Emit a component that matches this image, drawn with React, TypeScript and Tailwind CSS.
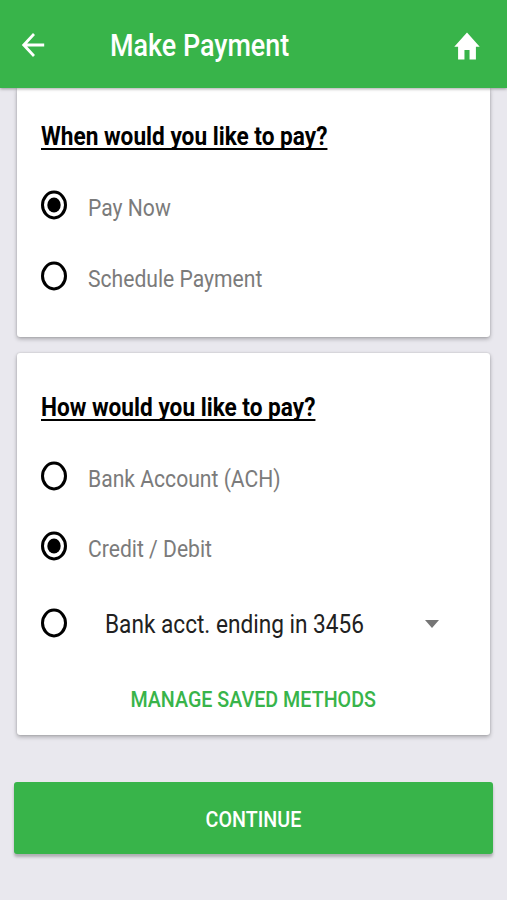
import React from 'react'

function Radio({ checked = false }: { checked?: boolean }) {
  return (
    <svg className="h-[30px] w-7 shrink-0" viewBox="0 0 28 30" fill="none">
      <ellipse cx="14" cy="15" rx="11.5" ry="12.9" stroke="#000" strokeWidth="3" />
      {checked && <ellipse cx="14" cy="15" rx="6.7" ry="7.5" fill="#000" />}
    </svg>
  )
}

function Option({ label, checked }: { label: string; checked?: boolean }) {
  return (
    <label className="flex h-[70.5px] items-center pl-[23px]">
      <Radio checked={checked} />
      <span className="ml-5 mt-1.5 origin-left scale-x-[0.88] whitespace-nowrap text-[24px] text-[#7b7b7b]">{label}</span>
    </label>
  )
}

function Heading({ children }: { children: string }) {
  return (
    <h2 className="flex h-[67px] items-center pl-6 pt-px">
      <span className="origin-left scale-x-[0.905] whitespace-nowrap text-[25px] font-bold text-black underline decoration-[1.5px] underline-offset-[3px] [text-decoration-skip-ink:none]">{children}</span>
    </h2>
  )
}

export default function App() {
  return (
    <div className="flex h-[900px] w-[507px] flex-col overflow-hidden bg-[#e9e8ee] font-[Roboto,sans-serif]">
      <header className="z-10 flex h-[87.5px] shrink-0 items-center bg-[#38b44a] pl-[19px] pr-[26px] pt-1 text-white shadow-[0_1px_3px_rgba(0,0,0,0.35)]">
        <svg className="-mt-0.5 h-[30px] w-7" viewBox="2 2 20 20" preserveAspectRatio="none" fill="currentColor">
          <path d="M20 11H7.83l5.59-5.59L12 4l-8 8 8 8 1.41-1.41L7.83 13H20v-2z" />
        </svg>
        <h1 className="ml-[63px] origin-left scale-x-[0.868] whitespace-nowrap text-[31px] font-medium">Make Payment</h1>
        <svg className="ml-auto h-[30px] w-[28px]" viewBox="1 2 22 19" preserveAspectRatio="none" fill="currentColor">
          <path d="M10 20v-6h4v6h5v-8h3L12 3 2 12h3v8z" />
        </svg>
      </header>

      <main className="flex flex-col">
        <section className="mx-[17px] h-[249px] rounded-b-[3px] bg-white pt-[15.5px] shadow-[0_2px_4px_rgba(0,0,0,0.28),0_0_2px_rgba(0,0,0,0.16)]">
          <Heading>When would you like to pay?</Heading>
          <Option label="Pay Now" checked />
          <Option label="Schedule Payment" />
        </section>

        <section className="mx-[17px] mt-4 h-[382px] rounded-[3px] bg-white pt-[21px] shadow-[0_2px_4px_rgba(0,0,0,0.28),0_0_2px_rgba(0,0,0,0.16)]">
          <Heading>How would you like to pay?</Heading>
          <Option label="Bank Account (ACH)" />
          <Option label="Credit / Debit" checked />
          <div className="flex h-[83px] items-center pl-[23px] pr-[51px]">
            <Radio />
            <span className="ml-[37px] mt-[3px] origin-left scale-x-[0.905] whitespace-nowrap text-[25px] text-[#212121]">Bank acct. ending in 3456</span>
            <svg className="ml-auto mt-0.5 h-2 w-[14px] shrink-0" viewBox="0 0 14 8" fill="#757575">
              <path d="M0 0h14L7 8z" />
            </svg>
          </div>
          <button className="flex h-[69px] w-full items-center justify-center text-[22px] font-medium text-[#38b44a]">
            <span className="scale-x-[0.895] whitespace-nowrap">MANAGE SAVED METHODS</span>
          </button>
        </section>

        <button className="mx-[14px] mt-[47.5px] flex h-[72px] items-center justify-center rounded-[3px] bg-[#38b44a] pt-0.5 text-[22px] font-medium text-white shadow-[0_3px_3px_rgba(0,0,0,0.25)]">
          <span className="scale-x-[0.895]">CONTINUE</span>
        </button>
      </main>
    </div>
  )
}
